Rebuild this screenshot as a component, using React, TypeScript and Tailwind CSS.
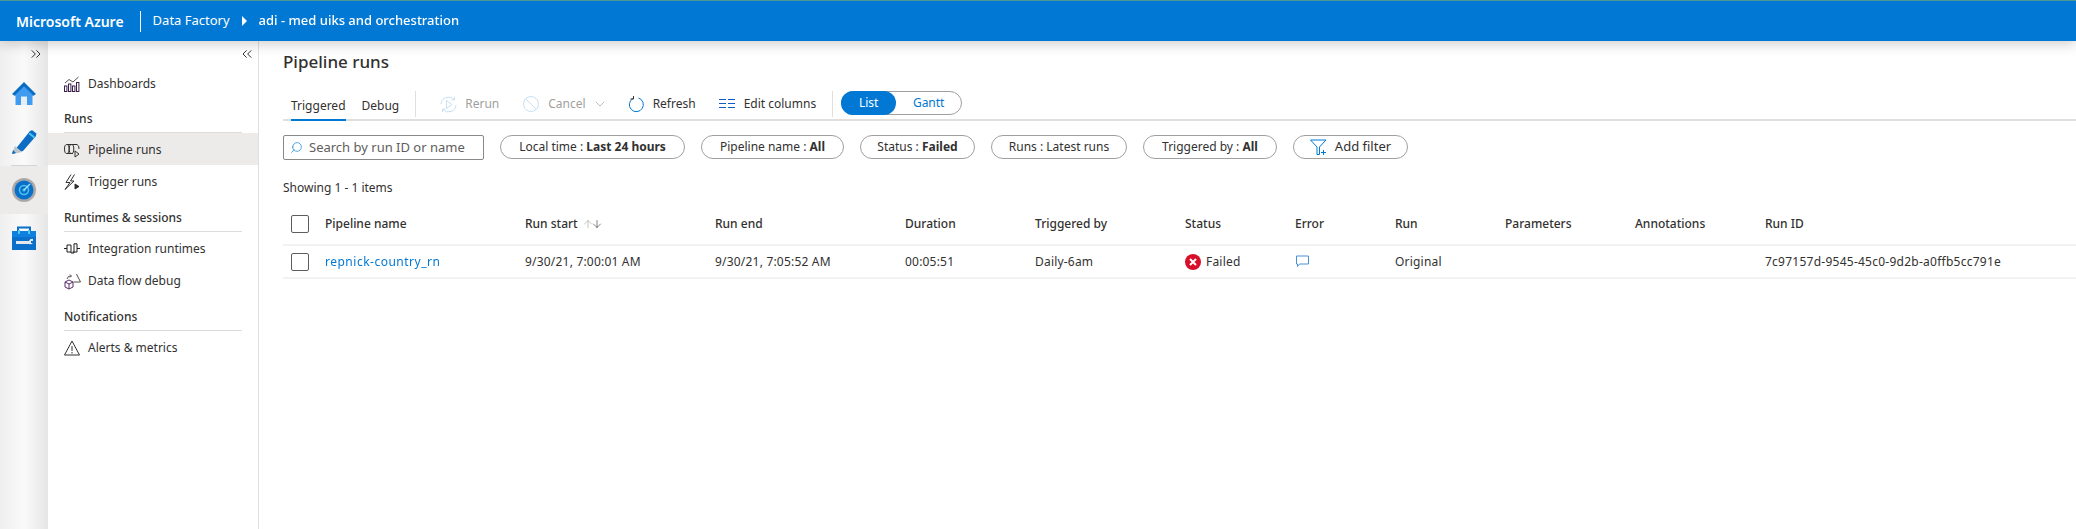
import { ChevronDown, ChevronsLeft, ChevronsRight, ArrowUp, ArrowDown, Search } from "lucide-react";

const font = "font-['Noto_Sans','Open_Sans',sans-serif]";

function HomeIcon() {
  return (
    <svg width="26" height="26" viewBox="0 0 26 26">
      <path d="M13 1 L25 13 L22 15 L13 6 L4 15 L1 13 Z" fill="#0b6cc4" />
      <path d="M4.5 13.5 L13 5.5 L21.5 13.5 V24 H4.5 Z" fill="#3f9bef" />
      <rect x="10" y="15.5" width="6" height="8.5" fill="#e8eef4" />
    </svg>
  );
}

function PencilIcon() {
  return (
    <svg width="26" height="26" viewBox="0 0 26 26">
      <path d="M7 17 L19 2 L25 7 L12 22 L1 25 Z" fill="#0b6cc4" />
      <path d="M18 3.5 L20 1.5 Q21 1 22 1.7 L25 4.3 Q25.7 5.4 25 6.4 L23.5 8.2 Z" fill="#0b6cc4" />
      <path d="M17.5 5 L23 9.5 L24.3 8 L18.8 3.5 Z" fill="#4fc3f0" />
      <path d="M4 17 L11 23 L1 25 Z" fill="#b9c4cc" />
      <path d="M1 25 L2 21 L5 24 Z" fill="#0b6cc4" />
    </svg>
  );
}

function MonitorIcon() {
  return (
    <svg width="24" height="24" viewBox="0 0 24 24">
      <circle cx="12" cy="12" r="12" fill="#a9a9a9" />
      <circle cx="12" cy="12" r="9.5" fill="#0a6fc8" />
      <circle cx="12" cy="12" r="4.5" fill="none" stroke="#4fc3f0" strokeWidth="1.5" />
      <circle cx="12" cy="12" r="1.6" fill="#4fc3f0" />
      <path d="M12 12 L18 6" stroke="#9fe0f7" strokeWidth="1.5" />
    </svg>
  );
}

function ToolboxIcon() {
  return (
    <svg width="24" height="24" viewBox="0 0 24 24">
      <path d="M6 6 V1.5 H18 V6" fill="none" stroke="#0a6fc8" strokeWidth="2" />
      <rect x="0" y="5" width="24" height="19" fill="#0a70c9" />
      <rect x="0" y="5" width="24" height="6" fill="#0e80dd" />
      <rect x="6" y="4" width="2" height="4" fill="#56c4ef" />
      <rect x="16" y="4" width="2" height="4" fill="#56c4ef" />
      <path d="M4 15 H17 A3.5 3.5 0 0 1 21 13 V15 H19 V17 H21 A3.5 3.5 0 0 1 17 18 H4 Z" fill="#e2e8ee" />
    </svg>
  );
}

function DashboardsIcon() {
  return (
    <svg width="16" height="16" viewBox="0 0 16 16" fill="none" stroke="#3a1e4c" strokeWidth="1">
      <rect x="0.5" y="10" width="2.4" height="5.5" />
      <rect x="4.5" y="8" width="2.4" height="7.5" />
      <rect x="8.5" y="10" width="2.4" height="5.5" />
      <rect x="12.5" y="6.5" width="2.4" height="9" />
      <path d="M1 7 L5 3.5 L9 6 L14.5 1" stroke="#55504a" />
    </svg>
  );
}

function PipelineIcon() {
  return (
    <svg width="16" height="16" viewBox="0 0 16 16" fill="none" stroke="#323130" strokeWidth="1">
      <ellipse cx="2.8" cy="7" rx="2.3" ry="4.5" />
      <ellipse cx="7.5" cy="7" rx="2.3" ry="4.5" />
      <path d="M3 2.5 H13 Q15.3 3.5 15 7 M3 11.5 H9" />
      <path d="M11 9 V15 L15 12 Z" stroke="#323130" />
    </svg>
  );
}

function TriggerIcon() {
  return (
    <svg width="16" height="17" viewBox="0 0 16 17" fill="none" stroke="#323130" strokeWidth="1">
      <path d="M7 0.5 L2 8.5 H6 L1 15.5 L10 7 H6.5 L10.5 0.5" />
      <path d="M11 10 V15 L15 12.5 Z" fill="#323130" />
    </svg>
  );
}

function RuntimeIcon() {
  return (
    <svg width="16" height="12" viewBox="0 0 16 12" fill="none" stroke="#1f1f1f" strokeWidth="1">
      <path d="M0 5.5 H3 M13 5.5 H16" />
      <path d="M3 2 H7 V10 H10 V0.8 H13 V9 H8.5 M3 2 V9 H7" />
    </svg>
  );
}

function DataFlowIcon() {
  return (
    <svg width="17" height="17" viewBox="0 0 17 17" fill="none" strokeWidth="1">
      <path d="M1 9 L5 7 L9 9 V14 L5 16 L1 14 Z M1 9 L5 11 L9 9 M5 11 V16" stroke="#5c2d6e" />
      <path d="M12.5 1 L16.5 9 H9.5" stroke="#55504a" />
      <path d="M3 6 Q4 2.5 7 3 M6 1.5 L7.5 3 L6 4.5" stroke="#55504a" />
    </svg>
  );
}

function AlertIcon() {
  return (
    <svg width="16" height="16" viewBox="0 0 16 16" fill="none" stroke="#323130" strokeWidth="1">
      <path d="M8 1 L15.5 15 H0.5 Z" strokeLinejoin="round" />
      <path d="M8 6 V11 M8 12 V13.5" />
    </svg>
  );
}

function RerunIcon() {
  return (
    <svg width="17" height="17" viewBox="0 0 17 17" fill="none" stroke="#c7e0f4" strokeWidth="1">
      <path d="M6.5 4.5 V12.5 L12 8.5 Z" />
      <path d="M1 8 A7.5 7.5 0 0 1 14 3.5 M14.5 1 V4 H11.5" />
      <path d="M16 9 A7.5 7.5 0 0 1 3 13.5 M2.5 16 V13 H5.5" />
    </svg>
  );
}

function CancelIcon() {
  return (
    <svg width="16" height="16" viewBox="0 0 16 16" fill="none" stroke="#c7e0f4" strokeWidth="1">
      <circle cx="8" cy="8" r="7.5" />
      <path d="M2.8 2.8 L13.2 13.2" />
    </svg>
  );
}

function RefreshIcon() {
  return (
    <svg width="17" height="17" viewBox="0 0 17 17" fill="none" stroke="#0078d4" strokeWidth="1">
      <path d="M10.5 2 A7 7 0 1 1 5 2.5" />
      <path d="M5.5 0 V3 H2.5" stroke="#323130" />
    </svg>
  );
}

function ColumnsIcon() {
  return (
    <svg width="16" height="10" viewBox="0 0 16 10" fill="none" stroke="#0b5cc4" strokeWidth="1">
      <path d="M0 0.5 H7 M9 0.5 H16 M0 4.5 H7 M9 4.5 H16 M0 8.5 H7 M9 8.5 H16" />
    </svg>
  );
}

function AddFilterIcon() {
  return (
    <svg width="17" height="17" viewBox="0 0 17 17" fill="none" stroke="#0078d4" strokeWidth="1">
      <path d="M0.5 1 H16 L9.5 8 V15.5 H7 V8 Z" />
      <path d="M11 13.5 H16 M13.5 11 V16" />
    </svg>
  );
}

function FailedIcon() {
  return (
    <svg width="16" height="16" viewBox="0 0 16 16">
      <circle cx="8" cy="8" r="8" fill="#d80f2a" />
      <path d="M5 5 L11 11 M11 5 L5 11" stroke="#fff" strokeWidth="2" />
    </svg>
  );
}

function CommentIcon() {
  return (
    <svg width="13" height="13" viewBox="0 0 13 13" fill="none" stroke="#4a90d9" strokeWidth="1">
      <path d="M0.5 1 H12.5 V9 H3.5 L1.5 11.5 V9 H0.5 Z" />
    </svg>
  );
}

function NavItem({ icon, label, active }: { icon: React.ReactNode; label: string; active?: boolean }) {
  return (
    <div className={`flex h-8 items-center pl-4 pt-[2px] text-[12px] text-[#323130] ${active ? "bg-[#edebe9]" : ""}`}>
      <span className="flex w-6 justify-start">{icon}</span>
      <span>{label}</span>
    </div>
  );
}

function NavHeading({ label }: { label: string }) {
  return (
    <div className="mx-4 mt-[12px] flex h-[23px] items-start border-b border-[#dcdcdc] text-[12px] font-medium leading-[18px] text-[#323130]">
      {label}
    </div>
  );
}

function Pill({ width, label, value, semibold = true }: { width: string; label: string; value: string; semibold?: boolean }) {
  return (
    <div className={`flex h-6 ${width} items-center justify-center rounded-full border border-[#a19f9d] text-[12px] text-[#323130]`}>
      <span className="whitespace-pre">{label} : </span>
      <span className={semibold ? "font-bold" : ""}>{value}</span>
    </div>
  );
}

const tableCols = "grid grid-cols-[42px_200px_190px_190px_130px_150px_110px_100px_110px_130px_130px_1fr] items-center";

function Checkbox() {
  return <span className="ml-2 block h-[18px] w-[18px] rounded-[2px] border border-[#605e5c]" />;
}

export default function App() {
  return (
    <div className={`flex h-[529px] w-full flex-col overflow-hidden bg-white ${font}`}>
      <header className="relative z-10 flex h-[41px] items-center border-t border-[#4f9a94] bg-[#0078d4] pl-4 text-white shadow-[0_2px_14px_rgba(0,0,0,0.22)]">
        <span className="text-[14px] font-semibold">Microsoft Azure</span>
        <span className="ml-4 h-[21px] w-px bg-white" />
        <span className="ml-3 text-[13px]">Data Factory</span>
        <span className="ml-3 h-0 w-0 border-y-[5px] border-l-[5px] border-y-transparent border-l-white" />
        <span className="ml-3 text-[13px] font-medium blur-[0.5px]">adi - med uiks and orchestration</span>
      </header>

      <div className="flex min-h-0 flex-1">
        <aside className="flex w-12 shrink-0 flex-col bg-gradient-to-r from-[#efefef] via-[#fafafa] to-[#e6e6e6]">
          <div className="flex h-[29px] items-start justify-end pr-1 pt-[5px]">
            <ChevronsRight className="h-4 w-4 text-[#323130]" strokeWidth={1.5} />
          </div>
          <div className="flex h-12 items-center justify-center"><HomeIcon /></div>
          <div className="flex h-12 items-center justify-center border-b border-[#d4d4d4] [border-image:linear-gradient(to_right,transparent_25%,#d4d4d4_25%,#d4d4d4_75%,transparent_75%)_1]"><PencilIcon /></div>
          <div className="flex h-12 items-center justify-center bg-[#edebe9]"><MonitorIcon /></div>
          <div className="flex h-12 items-center justify-center"><ToolboxIcon /></div>
        </aside>

        <nav className="w-[211px] shrink-0 border-r border-[#e1dfdd]">
          <div className="flex h-[26px] items-start justify-end pr-[3px] pt-[5px]">
            <ChevronsLeft className="h-4 w-4 text-[#323130]" strokeWidth={1.5} />
          </div>
          <NavItem icon={<DashboardsIcon />} label="Dashboards" />
          <div className="mx-4 mt-[12px] flex h-[22px] items-start border-b border-[#dcdcdc] text-[12px] font-medium leading-[16px] text-[#323130]">Runs</div>
          <NavItem icon={<PipelineIcon />} label="Pipeline runs" active />
          <NavItem icon={<TriggerIcon />} label="Trigger runs" />
          <NavHeading label="Runtimes & sessions" />
          <NavItem icon={<RuntimeIcon />} label="Integration runtimes" />
          <NavItem icon={<DataFlowIcon />} label="Data flow debug" />
          <NavHeading label="Notifications" />
          <NavItem icon={<AlertIcon />} label="Alerts & metrics" />
        </nav>

        <main className="min-w-0 flex-1 pl-6 text-[12px] text-[#323130]">
          <h1 className="mt-[8px] h-[26px] text-[17px] font-medium leading-[26px]">Pipeline runs</h1>

          <div className="mt-[16px] flex h-[30px] items-stretch border-b-2 border-[#e1dfdd]">
            <div className="ml-2 -mb-[2px] flex items-end border-b-2 border-[#0078d4] pb-[4px] leading-[18px]">Triggered</div>
            <div className="ml-4 flex items-end pb-[4px] leading-[18px]">Debug</div>
            <div className="ml-[16px] mb-[2px] w-px bg-[#e1dfdd]" />
            <div className="ml-[24px] flex h-[26px] items-center gap-[8px] text-[#a19f9d]"><RerunIcon />Rerun</div>
            <div className="ml-[24px] flex h-[26px] items-center gap-[9px] text-[#a19f9d]"><CancelIcon />Cancel<ChevronDown className="-ml-[3px] h-4 w-4" strokeWidth={1} /></div>
            <div className="ml-[20px] flex h-[26px] items-center gap-[8px]"><RefreshIcon />Refresh</div>
            <div className="ml-[23px] flex h-[26px] items-center gap-[9px]"><ColumnsIcon />Edit columns</div>
            <div className="ml-[16px] mb-[2px] w-px bg-[#e1dfdd]" />
            <div className="ml-[8px] flex h-[24px] w-[121px] items-stretch rounded-full border border-[#a19f9d]">
              <span className="-my-px -ml-px flex w-[55px] items-center justify-center rounded-full bg-[#0078d4] text-white">List</span>
              <span className="flex flex-1 items-center justify-center text-[#0078d4]">Gantt</span>
            </div>
          </div>

          <div className="mt-[14px] flex h-[25px] items-start gap-4">
            <div className="flex h-[25px] w-[201px] items-center rounded-[2px] border border-[#8a8886] pl-1.5 text-[13px] text-[#605e5c]">
              <Search className="mr-[6px] h-[13px] w-[13px] -scale-x-100 text-[#0078d4]" strokeWidth={1.2} />
              Search by run ID or name
            </div>
            <Pill width="w-[185px]" label="Local time" value="Last 24 hours" />
            <Pill width="w-[143px]" label="Pipeline name" value="All" />
            <Pill width="w-[115px]" label="Status" value="Failed" />
            <Pill width="w-[136px]" label="Runs" value="Latest runs" semibold={false} />
            <Pill width="w-[134px]" label="Triggered by" value="All" />
            <div className="flex h-6 w-[115px] items-center justify-center gap-2 rounded-full border border-[#a19f9d] text-[13px]"><AddFilterIcon />Add filter</div>
          </div>

          <div className="mt-[19px] h-[18px] leading-[18px]">Showing 1 - 1 items</div>

          <div className={`${tableCols} mt-[6px] h-[43px] border-b-2 border-[#f3f2f1] font-medium`}>
            <Checkbox />
            <span>Pipeline name</span>
            <span className="flex items-center gap-1">Run start
              <span className="flex">
                <ArrowUp className="-mr-[3px] h-3 w-3 text-[#a19f9d]" strokeWidth={1.2} />
                <ArrowDown className="h-3 w-3" strokeWidth={1.2} />
              </span>
            </span>
            <span>Run end</span>
            <span>Duration</span>
            <span>Triggered by</span>
            <span>Status</span>
            <span>Error</span>
            <span>Run</span>
            <span>Parameters</span>
            <span>Annotations</span>
            <span>Run ID</span>
          </div>

          <div className={`${tableCols} h-[33px] border-b-2 border-[#f3f2f1] tracking-[0.2px]`}>
            <Checkbox />
            <span className="text-[#0078d4] tracking-[0.5px] blur-[0.7px]">repnick-country_rn</span>
            <span>9/30/21, 7:00:01 AM</span>
            <span>9/30/21, 7:05:52 AM</span>
            <span>00:05:51</span>
            <span>Daily-6am</span>
            <span className="flex items-center gap-[5px]"><FailedIcon />Failed</span>
            <span className="pl-px"><CommentIcon /></span>
            <span>Original</span>
            <span />
            <span />
            <span className="tracking-[0.25px]">7c97157d-9545-45c0-9d2b-a0ffb5cc791e</span>
          </div>
        </main>
      </div>
    </div>
  );
}
